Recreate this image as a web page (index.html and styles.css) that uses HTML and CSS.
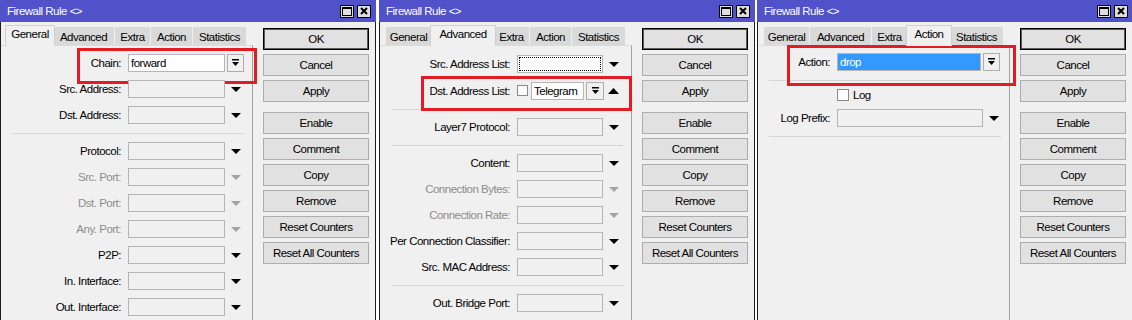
FILE: index.html
```html
<!DOCTYPE html>
<html>
<head>
<meta charset="utf-8">
<link rel="stylesheet" href="styles.css">
</head>
<body>
<div class="desk">

  <!-- Window 1: General -->
  <div class="win w1">
    <div class="title"><span class="ttext">Firewall Rule &lt;&gt;</span>
      <div class="tbtns">
        <span class="tb"><svg width="10" height="9" viewBox="0 0 10 9"><rect x="0.5" y="0.5" width="9" height="8" fill="none" stroke="#000"/><rect x="0" y="0" width="10" height="2"/></svg></span>
        <span class="tb"><svg width="8" height="8" viewBox="0 0 8 8"><path d="M1 1L7 7M7 1L1 7" stroke="#000" stroke-width="2"/></svg></span>
      </div>
    </div>
    <div class="body">
      <div class="left">
        <div class="tabs">
          <span class="tab t-gen sel">General</span><span class="tab t-adv">Advanced</span><span class="tab t-ext">Extra</span><span class="tab t-act">Action</span><span class="tab t-sta">Statistics</span>
        </div>
        <div class="pane">
          <div class="row hl hl1"><span class="lbl">Chain:</span><span class="inp white iw-chain">forward</span><span class="dd"><svg width="7" height="8" viewBox="0 0 7 8"><path d="M0 0H7V1.5H0Z M0 3H7L3.5 7Z"/></svg></span></div>
          <div class="row"><span class="lbl">Src. Address:</span><span class="inp"></span><svg class="arr" width="10" height="5" viewBox="0 0 10 5"><path d="M0 0H10L5 5Z"/></svg></div>
          <div class="row"><span class="lbl">Dst. Address:</span><span class="inp"></span><svg class="arr" width="10" height="5" viewBox="0 0 10 5"><path d="M0 0H10L5 5Z"/></svg></div>
          <div class="sep"></div>
          <div class="row"><span class="lbl">Protocol:</span><span class="inp"></span><svg class="arr" width="10" height="5" viewBox="0 0 10 5"><path d="M0 0H10L5 5Z"/></svg></div>
          <div class="row dis"><span class="lbl">Src. Port:</span><span class="inp"></span><svg class="arr" width="10" height="5" viewBox="0 0 10 5"><path d="M0 0H10L5 5Z"/></svg></div>
          <div class="row dis"><span class="lbl">Dst. Port:</span><span class="inp"></span><svg class="arr" width="10" height="5" viewBox="0 0 10 5"><path d="M0 0H10L5 5Z"/></svg></div>
          <div class="row dis"><span class="lbl">Any. Port:</span><span class="inp"></span><svg class="arr" width="10" height="5" viewBox="0 0 10 5"><path d="M0 0H10L5 5Z"/></svg></div>
          <div class="row"><span class="lbl">P2P:</span><span class="inp"></span><svg class="arr" width="10" height="5" viewBox="0 0 10 5"><path d="M0 0H10L5 5Z"/></svg></div>
          <div class="row"><span class="lbl">In. Interface:</span><span class="inp"></span><svg class="arr" width="10" height="5" viewBox="0 0 10 5"><path d="M0 0H10L5 5Z"/></svg></div>
          <div class="row"><span class="lbl">Out. Interface:</span><span class="inp"></span><svg class="arr" width="10" height="5" viewBox="0 0 10 5"><path d="M0 0H10L5 5Z"/></svg></div>
        </div>
      </div>
      <div class="btns">
        <span class="btn def">OK</span>
        <span class="btn">Cancel</span>
        <span class="btn">Apply</span>
        <span class="btn gap">Enable</span>
        <span class="btn">Comment</span>
        <span class="btn">Copy</span>
        <span class="btn">Remove</span>
        <span class="btn">Reset Counters</span>
        <span class="btn">Reset All Counters</span>
      </div>
    </div>
  </div>

  <!-- Window 2: Advanced -->
  <div class="win w2">
    <div class="title"><span class="ttext">Firewall Rule &lt;&gt;</span>
      <div class="tbtns">
        <span class="tb"><svg width="10" height="9" viewBox="0 0 10 9"><rect x="0.5" y="0.5" width="9" height="8" fill="none" stroke="#000"/><rect x="0" y="0" width="10" height="2"/></svg></span>
        <span class="tb"><svg width="8" height="8" viewBox="0 0 8 8"><path d="M1 1L7 7M7 1L1 7" stroke="#000" stroke-width="2"/></svg></span>
      </div>
    </div>
    <div class="body">
      <div class="left">
        <div class="tabs">
          <span class="tab t-gen">General</span><span class="tab t-adv sel">Advanced</span><span class="tab t-ext">Extra</span><span class="tab t-act">Action</span><span class="tab t-sta">Statistics</span>
        </div>
        <div class="pane">
          <div class="row"><span class="lbl">Src. Address List:</span><span class="inp white focus"></span><svg class="arr" width="10" height="5" viewBox="0 0 10 5"><path d="M0 0H10L5 5Z"/></svg></div>
          <div class="row tall hl hl2"><span class="lbl">Dst. Address List:</span><span class="chk"></span><span class="inp white iw-tel">Telegram</span><span class="dd dd-wide"><svg width="7" height="8" viewBox="0 0 7 8"><path d="M0 0H7V1.5H0Z M0 3H7L3.5 7Z"/></svg></span><svg class="arr up" width="11" height="6" viewBox="0 0 11 6"><path d="M0 6H11L5.5 0Z"/></svg></div>
          <div class="sep"></div>
          <div class="row"><span class="lbl">Layer7 Protocol:</span><span class="inp"></span><svg class="arr" width="10" height="5" viewBox="0 0 10 5"><path d="M0 0H10L5 5Z"/></svg></div>
          <div class="sep"></div>
          <div class="row"><span class="lbl">Content:</span><span class="inp"></span><svg class="arr" width="10" height="5" viewBox="0 0 10 5"><path d="M0 0H10L5 5Z"/></svg></div>
          <div class="row dis"><span class="lbl">Connection Bytes:</span><span class="inp"></span><svg class="arr" width="10" height="5" viewBox="0 0 10 5"><path d="M0 0H10L5 5Z"/></svg></div>
          <div class="row dis"><span class="lbl">Connection Rate:</span><span class="inp"></span><svg class="arr" width="10" height="5" viewBox="0 0 10 5"><path d="M0 0H10L5 5Z"/></svg></div>
          <div class="row"><span class="lbl">Per Connection Classifier:</span><span class="inp"></span><svg class="arr" width="10" height="5" viewBox="0 0 10 5"><path d="M0 0H10L5 5Z"/></svg></div>
          <div class="row"><span class="lbl">Src. MAC Address:</span><span class="inp"></span><svg class="arr" width="10" height="5" viewBox="0 0 10 5"><path d="M0 0H10L5 5Z"/></svg></div>
          <div class="sep"></div>
          <div class="row"><span class="lbl">Out. Bridge Port:</span><span class="inp"></span><svg class="arr" width="10" height="5" viewBox="0 0 10 5"><path d="M0 0H10L5 5Z"/></svg></div>
        </div>
      </div>
      <div class="btns">
        <span class="btn def">OK</span>
        <span class="btn">Cancel</span>
        <span class="btn">Apply</span>
        <span class="btn gap">Enable</span>
        <span class="btn">Comment</span>
        <span class="btn">Copy</span>
        <span class="btn">Remove</span>
        <span class="btn">Reset Counters</span>
        <span class="btn">Reset All Counters</span>
      </div>
    </div>
  </div>

  <!-- Window 3: Action -->
  <div class="win w3">
    <div class="title"><span class="ttext">Firewall Rule &lt;&gt;</span>
      <div class="tbtns">
        <span class="tb"><svg width="10" height="9" viewBox="0 0 10 9"><rect x="0.5" y="0.5" width="9" height="8" fill="none" stroke="#000"/><rect x="0" y="0" width="10" height="2"/></svg></span>
        <span class="tb"><svg width="8" height="8" viewBox="0 0 8 8"><path d="M1 1L7 7M7 1L1 7" stroke="#000" stroke-width="2"/></svg></span>
      </div>
    </div>
    <div class="body">
      <div class="left">
        <div class="tabs">
          <span class="tab t-gen">General</span><span class="tab t-adv">Advanced</span><span class="tab t-ext">Extra</span><span class="tab t-act sel">Action</span><span class="tab t-sta">Statistics</span>
        </div>
        <div class="pane">
          <div class="row hl hl3"><span class="lbl">Action:</span><span class="inp selected iw-act">drop</span><span class="dd"><svg width="7" height="8" viewBox="0 0 7 8"><path d="M0 0H7V1.5H0Z M0 3H7L3.5 7Z"/></svg></span></div>
          <div class="sep"></div>
          <div class="row short"><span class="lbl"></span><span class="chk big"></span><span class="chk-text">Log</span></div>
          <div class="row"><span class="lbl">Log Prefix:</span><span class="inp iw-log"></span><svg class="arr" width="10" height="5" viewBox="0 0 10 5"><path d="M0 0H10L5 5Z"/></svg></div>
          <div class="sep"></div>
        </div>
      </div>
      <div class="btns">
        <span class="btn def">OK</span>
        <span class="btn">Cancel</span>
        <span class="btn">Apply</span>
        <span class="btn gap">Enable</span>
        <span class="btn">Comment</span>
        <span class="btn">Copy</span>
        <span class="btn">Remove</span>
        <span class="btn">Reset Counters</span>
        <span class="btn">Reset All Counters</span>
      </div>
    </div>
  </div>

</div>
</body>
</html>
```

FILE: styles.css
```css
* { box-sizing: border-box; }

body {
  margin: 0;
  background: #ffffff;
  font-family: "Liberation Sans", Arial, sans-serif;
  font-size: 11.5px;
  letter-spacing: -0.5px;
  color: #000;
}

.desk {
  display: flex;
  align-items: flex-start;
  height: 320px;
  overflow: hidden;
}

.win {
  flex: none;
  width: 376px;
  height: 340px;
  background: #f0f0f0;
  border: 1px solid #1c1c1c;
  border-top: 0;
  display: flex;
  flex-direction: column;
}
.w2 { margin-left: 3px; }
.w3 { margin-left: 2px; }

.w1 { --lw: 120px; --iw: 97px; --pt: 4px; }
.w2 { --lw: 130px; --iw: 86px; --pt: 5px; }
.w3 { --lw: 72px; --iw: 146px; --pt: 3px; }

.title {
  height: 22px;
  margin: 0 -1px;
  background: #5151c9;
  color: #fff;
  display: flex;
  align-items: center;
  padding-left: 7px;
}
.ttext { padding-bottom: 1px; }

.tbtns {
  margin-left: auto;
  margin-right: 5px;
  display: flex;
  gap: 3px;
}
.tb {
  width: 14px;
  height: 13px;
  background: #dedede;
  border: 1px solid #000;
  display: flex;
  align-items: center;
  justify-content: center;
}

.body {
  flex: 1;
  display: flex;
}

.left {
  width: 252px;
  flex: none;
  display: flex;
  flex-direction: column;
}

.tabs {
  height: 23px;
  display: flex;
  align-items: flex-end;
  padding-left: 6px;
}
.tab {
  position: relative;
  height: 18px;
  background: #d9d9d9;
  border-right: 1px solid #f0f0f0;
  display: flex;
  align-items: center;
  justify-content: center;
  flex: none;
  padding-top: 1px;
}
.t-gen { width: 46px; }
.t-adv { width: 62px; }
.t-ext { width: 36px; }
.t-act { width: 42px; }
.t-sta { width: 54px; }
.tab.sel {
  z-index: 1;
  height: 21px;
  margin: 0 -2px -1px;
  background: #f0f0f0;
  border: 1px solid #d0d0d0;
  border-bottom: 0;
  padding-top: 0;
  padding-bottom: 4px;
}
.t-gen.sel { width: 50px; }
.t-adv.sel { width: 66px; }
.t-act.sel { width: 46px; }

.pane {
  flex: 1;
  border-top: 1px solid #dcdcdc;
  border-right: 1px solid #a0a0a0;
  padding-top: var(--pt);
  display: flex;
  flex-direction: column;
}

.row {
  position: relative;
  height: 26px;
  flex: none;
  display: flex;
  align-items: center;
}
.row.tall { height: 27px; }
.row.short { height: 20px; }

.lbl {
  width: var(--lw);
  flex: none;
  margin-right: 7px;
  text-align: right;
  white-space: nowrap;
}
.row.dis .lbl { color: #8c8c8c; }

.inp {
  flex: none;
  width: var(--iw);
  height: 18px;
  border: 1px solid #b5b5b5;
  background: #f0f0f0;
  padding-left: 2px;
  display: flex;
  align-items: center;
  white-space: nowrap;
}
.inp.white { background: #fff; }
.inp.focus { outline: 1px dotted #000; outline-offset: -3px; }
.inp.selected { background: #3399ff; color: #fff; }
.iw-chain { width: 97px; }
.iw-tel { width: 53px; }
.iw-act { width: 144px; }
.iw-log { width: 146px; }

.arr {
  flex: none;
  margin-left: 6px;
  fill: #000;
}
.row.dis .arr { fill: #a3a3a3; }
.arr.up { margin-left: 4px; }

.dd {
  flex: none;
  width: 17px;
  height: 18px;
  margin-left: 2px;
  border: 1px solid #adadad;
  background: #f0f0f0;
  display: flex;
  align-items: center;
  justify-content: center;
}
.dd svg { fill: #000; }
.dd-wide { width: 18px; }

.chk {
  flex: none;
  width: 11px;
  height: 11px;
  background: #fff;
  border: 1px solid #8a8a8a;
  margin-right: 3px;
}
.chk.big { width: 12px; height: 12px; margin-right: 4px; }
.chk-text { white-space: nowrap; }

.sep {
  flex: none;
  height: 1px;
  margin: 5px 8px 4px 11px;
  background: #d6d6d6;
}

.hl::after {
  content: "";
  position: absolute;
  border: 3px solid #e31b23;
  pointer-events: none;
}
.hl1::after { left: 76px; top: -2px; width: 174px; height: 30px; }
.hl2::after { left: 41px; top: -1px; width: 205px; height: 29px; }
.hl3::after { left: 29px; top: -4px; width: 223px; height: 35px; }

.btns {
  flex: none;
  width: 106px;
  margin-left: 10px;
  padding-top: 6px;
  display: flex;
  flex-direction: column;
  gap: 4px;
}
.btn {
  height: 22px;
  border: 1px solid #adadad;
  background: #e1e1e1;
  display: flex;
  align-items: center;
  justify-content: center;
  white-space: nowrap;
}
.btn.def {
  border-color: #000;
  box-shadow: inset 0 0 0 1px #5a5a5a;
}
.btn.gap { margin-top: 6px; }
```
